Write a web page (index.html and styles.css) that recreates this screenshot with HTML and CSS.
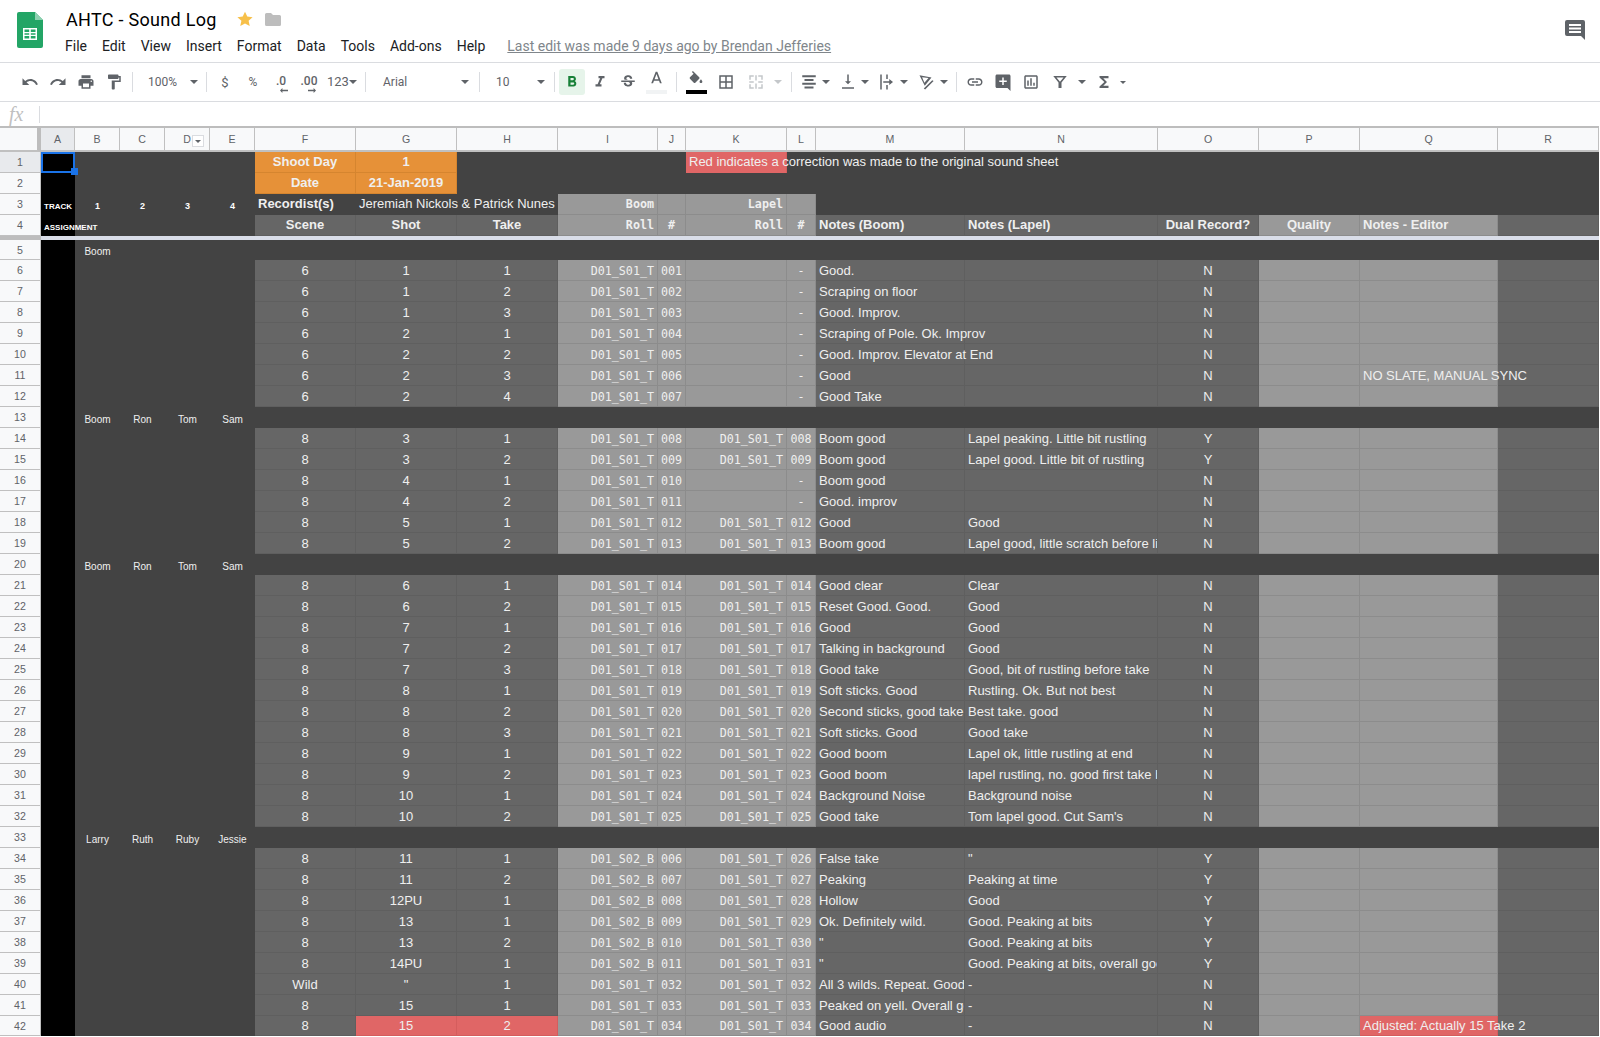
FILE: index.html
```html
<!DOCTYPE html>
<html lang="en">
<head>
<meta charset="utf-8">
<title>AHTC - Sound Log</title>
<link rel="stylesheet" href="styles.css">
</head>
<body>
<header class="top">
  <svg class="logo" viewBox="0 0 26 36"><path fill="#23a566" d="M2 0h16l8 8v26a2 2 0 0 1-2 2H2a2 2 0 0 1-2-2V2a2 2 0 0 1 2-2z"/><path fill="#8ed1b1" d="M18 0l8 8h-8z"/><path fill="#fff" d="M6 16h14v12H6zM7.500 17.500V20h4.700v-2.500zm6.300 0V20h4.700v-2.500zM7.500 21.200v1.600h4.700v-1.600zm6.300 0v1.600h4.700v-1.600zM7.500 24v2.500h4.700V24zm6.300 0v2.500h4.700V24z" fill-rule="evenodd"/></svg>
  <div class="doc">
    <div class="title-row">
      <span class="title">AHTC - Sound Log</span>
      <svg class="star" viewBox="0 0 24 24"><path fill="#f7c04a" d="M12 1l3.400 7.400 8 .9-6 5.400 1.700 7.900L12 18.600l-7.100 4 1.700-7.900-6-5.400 8-.9z"/></svg>
      <svg class="folder" viewBox="0 0 16 13"><path fill="#bdbdbd" d="M1.500 0H6l2 2h6.500A1.500 1.500 0 0 1 16 3.500v8a1.500 1.500 0 0 1-1.500 1.500h-13A1.500 1.500 0 0 1 0 11.500v-10A1.500 1.500 0 0 1 1.500 0z"/></svg>
    </div>
    <nav class="menu">
      <span>File</span><span>Edit</span><span>View</span><span>Insert</span><span>Format</span><span>Data</span><span>Tools</span><span>Add-ons</span><span>Help</span>
      <a class="last-edit">Last edit was made 9 days ago by Brendan Jefferies</a>
    </nav>
  </div>
  <svg class="chat" viewBox="0 0 20 20"><path fill="#5f6368" fill-rule="evenodd" d="M2 0h16a2 2 0 0 1 2 2v18l-4-4H2a2 2 0 0 1-2-2V2a2 2 0 0 1 2-2zm2 4v2h12V4zm0 3.500v2h12v-2zM4 11v2h12v-2z"/></svg>
</header>

<div class="toolbar">
  <span class="b"><svg viewBox="0 0 24 24"><path d="M12.500 8c-2.650 0-5.050.99-6.900 2.600L2 7v9h9l-3.620-3.620c1.390-1.160 3.160-1.880 5.120-1.880 3.540 0 6.550 2.310 7.600 5.500l2.370-.78C21.080 11.030 17.150 8 12.500 8z"/></svg></span>
  <span class="b"><svg viewBox="0 0 24 24"><path d="M18.400 10.600C16.550 8.990 14.150 8 11.500 8c-4.650 0-8.580 3.030-9.960 7.220L3.900 16c1.050-3.190 4.050-5.500 7.600-5.500 1.950 0 3.730.72 5.120 1.880L13 16h9V7l-3.600 3.600z"/></svg></span>
  <span class="b"><svg viewBox="0 0 24 24"><path d="M19 8H5c-1.660 0-3 1.340-3 3v6h4v4h12v-4h4v-6c0-1.660-1.340-3-3-3zm-3 11H8v-5h8v5zm3-7c-.55 0-1-.45-1-1s.45-1 1-1 1 .45 1 1-.45 1-1 1zm-1-9H6v4h12V3z"/></svg></span>
  <span class="b"><svg viewBox="0 0 24 24"><path d="M18 4V3c0-.55-.45-1-1-1H5c-.55 0-1 .45-1 1v4c0 .55.45 1 1 1h12c.55 0 1-.45 1-1V6h1v4H9v11c0 .55.45 1 1 1h2c.55 0 1-.45 1-1v-9h8V4h-3z"/></svg></span>
  <i class="sep s1"></i>
  <span class="sel zoomsel">100%<i class="arrow"></i></span>
  <i class="sep"></i>
  <span class="b ml4 txt">$</span>
  <span class="b txt small">%</span>
  <span class="b dec"><span>.0</span><svg viewBox="0 0 10 6"><path d="M0 3l3-3v2h7v2H3v2z"/></svg></span>
  <span class="b dec"><span>.00</span><svg viewBox="0 0 10 6"><path d="M10 3L7 0v2H0v2h7v2z"/></svg></span>
  <span class="sel numsel">123<i class="arrow"></i></span>
  <i class="sep"></i>
  <span class="sel fontsel">Arial<i class="arrow"></i></span>
  <i class="sep"></i>
  <span class="sel sizesel">10<i class="arrow"></i></span>
  <i class="sep"></i>
  <span class="b bold ml4"><svg viewBox="0 0 24 24"><path fill-rule="evenodd" d="M15.600 10.790c.97-.67 1.650-1.770 1.650-2.790 0-2.260-1.750-4-4-4H7v14h7.040c2.090 0 3.710-1.700 3.710-3.790 0-1.520-.86-2.820-2.150-3.420zM10 6.500h3c.83 0 1.500.67 1.500 1.500s-.67 1.500-1.500 1.500h-3v-3zm3.500 9H10v-3h3.500c.83 0 1.500.67 1.500 1.500s-.67 1.500-1.500 1.500z"/></svg></span>
  <span class="b"><svg viewBox="0 0 24 24"><path d="M10 4v3h2.210l-3.420 8H6v3h8v-3h-2.210l3.420-8H18V4z"/></svg></span>
  <span class="b"><svg viewBox="0 0 24 24"><path d="M7.240 8.750c-.26-.48-.39-1.030-.39-1.670 0-.61.13-1.160.4-1.670.26-.5.63-.93 1.110-1.290.48-.35 1.050-.63 1.700-.83.66-.19 1.390-.29 2.180-.29.81 0 1.540.11 2.210.34.66.22 1.230.54 1.690.94.47.4.83.88 1.080 1.430.25.55.38 1.150.38 1.810h-3.010c0-.31-.05-.59-.15-.85-.09-.27-.24-.49-.44-.68-.2-.19-.45-.33-.75-.44-.3-.1-.66-.16-1.060-.16-.39 0-.74.04-1.030.13-.29.09-.53.21-.72.36-.19.16-.34.34-.44.55-.1.21-.15.43-.15.66 0 .48.25.88.74 1.210.38.25.77.48 1.410.7H7.390c-.05-.08-.11-.17-.15-.25zM21 12v-2H3v2h9.620c.18.07.4.14.55.2.37.17.66.34.87.51.21.17.35.36.43.57.07.2.11.43.11.69 0 .23-.05.45-.14.66-.09.2-.23.38-.42.53-.19.15-.42.26-.71.35-.29.08-.63.13-1.010.13-.43 0-.83-.04-1.180-.13s-.66-.23-.91-.42c-.25-.19-.45-.44-.59-.75-.14-.31-.25-.76-.25-1.210H6.400c0 .55.08 1.130.24 1.580.16.45.37.85.65 1.210.28.35.6.66.98.92.37.26.78.48 1.220.65.44.17.9.3 1.380.39.48.08.96.13 1.440.13.8 0 1.530-.09 2.180-.28s1.210-.45 1.670-.79c.46-.34.82-.77 1.070-1.270s.38-1.070.38-1.710c0-.6-.1-1.140-.31-1.610-.05-.11-.11-.23-.17-.33H21z"/></svg></span>
  <span class="b colored tcolor"><svg viewBox="3 0 18 16"><path fill-rule="evenodd" d="M11 1L5.500 15h2.250l1.120-3h6.250l1.120 3h2.250L13 1h-2zm-1.380 9L12 3.670 14.380 10H9.620z"/></svg><i class="bar grey"></i></span>
  <i class="sep s2"></i>
  <span class="b colored ml5"><svg viewBox="0 0 24 24"><path d="M16.560 8.940L7.620 0 6.210 1.410l2.380 2.380-5.150 5.150c-.59.59-.59 1.540 0 2.120l5.500 5.500c.29.29.68.44 1.060.44s.77-.15 1.060-.44l5.500-5.500c.59-.58.59-1.530 0-2.120zM19 11.500s-2 2.170-2 3.500c0 1.100.9 2 2 2s2-.9 2-2c0-1.330-2-3.500-2-3.500z"/></svg><i class="bar black"></i></span>
  <span class="b ml2"><svg viewBox="0 0 24 24"><path fill-rule="evenodd" d="M3 3v18h18V3H3zm8 16H5v-6h6v6zm0-8H5V5h6v6zm8 8h-6v-6h6v6zm0-8h-6V5h6v6z"/></svg></span>
  <span class="b ml2 off"><svg viewBox="0 0 24 24"><path d="M3 3h6v2H5v4H3zM15 3h6v6h-2V5h-4zM3 15h2v4h4v2H3zM19 15h2v6h-6v-2h4zM3 11h6v2H3zM15 11h6v2h-6zM11 3h2v7h-2zM11 14h2v7h-2z"/></svg></span>
  <span class="ar16"><i class="arrow off"></i></span>
  <i class="sep s3"></i>
  <span class="c24 ml5"><svg viewBox="0 0 24 24"><path d="M3 3h18v2.500H3zM6 8h12v2.500H6zM3 13h18v2.500H3zM6 18h12v2.500H6z"/></svg></span>
  <span class="ar10"><i class="arrow"></i></span>
  <span class="c24 ml5"><svg viewBox="0 0 24 24"><path d="M16 11h-3V2h-2v9H8l4 4zM4 19v2h16v-2z"/></svg></span>
  <span class="ar10"><i class="arrow"></i></span>
  <span class="c24 ml5"><svg viewBox="0 0 24 24"><path d="M3 2h2v20H3zM11 2h2v6h-2zM11 16h2v6h-2zM7 11h8V8l5 4-5 4v-3H7z"/></svg></span>
  <span class="ar10"><i class="arrow"></i></span>
  <span class="c24 ml6"><svg viewBox="0 0 24 24"><path fill-rule="evenodd" d="M2 3l16 3-9 11zm3.500 2.600l3 7.300 5.500-6.300zM19 9.500l1.800 1.300L9.500 22l-1.800-1.300z"/></svg></span>
  <span class="ar10"><i class="arrow"></i></span>
  <i class="sep s4"></i>
  <span class="b ml4"><svg viewBox="0 0 24 24"><path d="M3.900 12c0-1.710 1.390-3.100 3.100-3.100h4V7H7c-2.760 0-5 2.240-5 5s2.240 5 5 5h4v-1.900H7c-1.710 0-3.100-1.390-3.100-3.100zM8 13h8v-2H8v2zm9-6h-4v1.900h4c1.710 0 3.100 1.390 3.100 3.100s-1.390 3.100-3.100 3.100h-4V17h4c2.760 0 5-2.240 5-5s-2.240-5-5-5z"/></svg></span>
  <span class="b"><svg viewBox="0 0 24 24"><path fill-rule="evenodd" d="M20 2H4c-1.100 0-2 .9-2 2v14c0 1.100.9 2 2 2h14l4 4V4c0-1.100-.9-2-2-2zm-3 10h-4v4h-2v-4H7v-2h4V6h2v4h4v2z"/></svg></span>
  <span class="b"><svg viewBox="0 0 24 24"><path fill-rule="evenodd" d="M19 3H5c-1.100 0-2 .9-2 2v14c0 1.100.9 2 2 2h14c1.100 0 2-.9 2-2V5c0-1.100-.9-2-2-2zm0 16H5V5h14v14zM9 17H7v-7h2v7zm4 0h-2V7h2v10zm4 0h-2v-4h2v4z"/></svg></span>
  <span class="b ml1"><svg viewBox="0 0 24 24"><path fill-rule="evenodd" d="M3 4h18l-7 8.500V20h-4v-7.500zM7.300 6l4.700 5.700L16.700 6z"/></svg></span>
  <span class="ar16"><i class="arrow"></i></span>
  <span class="b"><svg viewBox="0 0 24 24"><path d="M18 4H6v2l6.500 6L6 18v2h12v-3h-7l5-5-5-5h7V4z"/></svg></span>
  <span class="ar10"><i class="arrow tiny"></i></span>
</div>

<div class="formula"><span class="fx">fx</span><i class="fsep"></i></div>

<table class="sheet">
<colgroup><col class="w41"><col class="w34"><col class="w45"><col class="w45"><col class="w45"><col class="w45"><col class="w101"><col class="w101"><col class="w101"><col class="w100"><col class="w28"><col class="w101"><col class="w29"><col class="w149"><col class="w193"><col class="w101"><col class="w101"><col class="w138"><col class="w101"></colgroup>
<thead><tr><th class="corner"><th class="on">A<th>B<th>C<th class="dcol">D<span class="fbtn"><i class="arrow tiny"></i></span><th>E<th>F<th>G<th>H<th>I<th>J<th>K<th>L<th>M<th>N<th>O<th>P<th>Q<th>R</thead>
<tbody>
<tr class="r1"><th class="on">1<td class="sel"><i class="handle"></i><td><td><td><td><td class="o">Shoot Day<td class="o">1<td><td><td><td class="red">Red indicates a correction was made to the original sound sheet<td><td><td><td><td><td><td>
<tr class="r1"><th>2<td><td><td><td><td><td class="o">Date<td class="o">21-Jan-2019<td><td><td><td><td><td><td><td><td><td><td>
<tr class="r3"><th>3<td class="tk">TRACK<td class="tn">1<td class="tn">2<td class="tn">3<td class="tn">4<td class="lbl">Recordist(s)<td class="names">Jeremiah Nickols &amp; Patrick Nunes<td><td>Boom<td><td>Lapel<td><td><td><td><td><td><td>
<tr class="d r4"><th>4<td class="tk asg">ASSIGNMENT<td><td><td><td><td>Scene<td>Shot<td>Take<td>Roll<td>#<td>Roll<td>#<td>Notes (Boom)<td>Notes (Lapel)<td>Dual Record?<td>Quality<td>Notes - Editor<td>
<tr class="band"><th><td colspan="18">
<tr class="s r5"><th>5<td><td class="as">Boom<td><td><td><td><td><td><td><td><td><td><td><td><td><td><td><td>
<tr class="d"><th>6<td><td><td><td><td><td>6<td>1<td>1<td>D01_S01_T<td>001<td><td>-<td>Good.<td><td>N<td><td><td>
<tr class="d"><th>7<td><td><td><td><td><td>6<td>1<td>2<td>D01_S01_T<td>002<td><td>-<td>Scraping on floor<td><td>N<td><td><td>
<tr class="d"><th>8<td><td><td><td><td><td>6<td>1<td>3<td>D01_S01_T<td>003<td><td>-<td>Good. Improv.<td><td>N<td><td><td>
<tr class="d"><th>9<td><td><td><td><td><td>6<td>2<td>1<td>D01_S01_T<td>004<td><td>-<td class="spill">Scraping of Pole. Ok. Improv<td><td>N<td><td><td>
<tr class="d"><th>10<td><td><td><td><td><td>6<td>2<td>2<td>D01_S01_T<td>005<td><td>-<td class="spill">Good. Improv. Elevator at End<td><td>N<td><td><td>
<tr class="d"><th>11<td><td><td><td><td><td>6<td>2<td>3<td>D01_S01_T<td>006<td><td>-<td>Good<td><td>N<td><td>NO SLATE, MANUAL SYNC<td>
<tr class="d"><th>12<td><td><td><td><td><td>6<td>2<td>4<td>D01_S01_T<td>007<td><td>-<td>Good Take<td><td>N<td><td><td>
<tr class="s"><th>13<td><td class="as">Boom<td class="as">Ron<td class="as">Tom<td class="as">Sam<td><td><td><td><td><td><td><td><td><td><td><td><td>
<tr class="d"><th>14<td><td><td><td><td><td>8<td>3<td>1<td>D01_S01_T<td>008<td>D01_S01_T<td>008<td>Boom good<td>Lapel peaking. Little bit rustling<td>Y<td><td><td>
<tr class="d"><th>15<td><td><td><td><td><td>8<td>3<td>2<td>D01_S01_T<td>009<td>D01_S01_T<td>009<td>Boom good<td>Lapel good. Little bit of rustling<td>Y<td><td><td>
<tr class="d"><th>16<td><td><td><td><td><td>8<td>4<td>1<td>D01_S01_T<td>010<td><td>-<td>Boom good<td><td>N<td><td><td>
<tr class="d"><th>17<td><td><td><td><td><td>8<td>4<td>2<td>D01_S01_T<td>011<td><td>-<td>Good. improv<td><td>N<td><td><td>
<tr class="d"><th>18<td><td><td><td><td><td>8<td>5<td>1<td>D01_S01_T<td>012<td>D01_S01_T<td>012<td>Good<td>Good<td>N<td><td><td>
<tr class="d"><th>19<td><td><td><td><td><td>8<td>5<td>2<td>D01_S01_T<td>013<td>D01_S01_T<td>013<td>Boom good<td>Lapel good, little scratch before line<td>N<td><td><td>
<tr class="s"><th>20<td><td class="as">Boom<td class="as">Ron<td class="as">Tom<td class="as">Sam<td><td><td><td><td><td><td><td><td><td><td><td><td>
<tr class="d"><th>21<td><td><td><td><td><td>8<td>6<td>1<td>D01_S01_T<td>014<td>D01_S01_T<td>014<td>Good clear<td>Clear<td>N<td><td><td>
<tr class="d"><th>22<td><td><td><td><td><td>8<td>6<td>2<td>D01_S01_T<td>015<td>D01_S01_T<td>015<td>Reset Good. Good.<td>Good<td>N<td><td><td>
<tr class="d"><th>23<td><td><td><td><td><td>8<td>7<td>1<td>D01_S01_T<td>016<td>D01_S01_T<td>016<td>Good<td>Good<td>N<td><td><td>
<tr class="d"><th>24<td><td><td><td><td><td>8<td>7<td>2<td>D01_S01_T<td>017<td>D01_S01_T<td>017<td>Talking in background<td>Good<td>N<td><td><td>
<tr class="d"><th>25<td><td><td><td><td><td>8<td>7<td>3<td>D01_S01_T<td>018<td>D01_S01_T<td>018<td>Good take<td>Good, bit of rustling before take<td>N<td><td><td>
<tr class="d"><th>26<td><td><td><td><td><td>8<td>8<td>1<td>D01_S01_T<td>019<td>D01_S01_T<td>019<td>Soft sticks. Good<td>Rustling. Ok. But not best<td>N<td><td><td>
<tr class="d"><th>27<td><td><td><td><td><td>8<td>8<td>2<td>D01_S01_T<td>020<td>D01_S01_T<td>020<td>Second sticks, good take<td>Best take. good<td>N<td><td><td>
<tr class="d"><th>28<td><td><td><td><td><td>8<td>8<td>3<td>D01_S01_T<td>021<td>D01_S01_T<td>021<td>Soft sticks. Good<td>Good take<td>N<td><td><td>
<tr class="d"><th>29<td><td><td><td><td><td>8<td>9<td>1<td>D01_S01_T<td>022<td>D01_S01_T<td>022<td>Good boom<td>Lapel ok, little rustling at end<td>N<td><td><td>
<tr class="d"><th>30<td><td><td><td><td><td>8<td>9<td>2<td>D01_S01_T<td>023<td>D01_S01_T<td>023<td>Good boom<td>lapel rustling, no. good first take better<td>N<td><td><td>
<tr class="d"><th>31<td><td><td><td><td><td>8<td>10<td>1<td>D01_S01_T<td>024<td>D01_S01_T<td>024<td>Background Noise<td>Background noise<td>N<td><td><td>
<tr class="d"><th>32<td><td><td><td><td><td>8<td>10<td>2<td>D01_S01_T<td>025<td>D01_S01_T<td>025<td>Good take<td>Tom lapel good. Cut Sam's<td>N<td><td><td>
<tr class="s"><th>33<td><td class="as">Larry<td class="as">Ruth<td class="as">Ruby<td class="as">Jessie<td><td><td><td><td><td><td><td><td><td><td><td><td>
<tr class="d"><th>34<td><td><td><td><td><td>8<td>11<td>1<td>D01_S02_B<td>006<td>D01_S01_T<td>026<td>False take<td>"<td>Y<td><td><td>
<tr class="d"><th>35<td><td><td><td><td><td>8<td>11<td>2<td>D01_S02_B<td>007<td>D01_S01_T<td>027<td>Peaking<td>Peaking at time<td>Y<td><td><td>
<tr class="d"><th>36<td><td><td><td><td><td>8<td>12PU<td>1<td>D01_S02_B<td>008<td>D01_S01_T<td>028<td>Hollow<td>Good<td>Y<td><td><td>
<tr class="d"><th>37<td><td><td><td><td><td>8<td>13<td>1<td>D01_S02_B<td>009<td>D01_S01_T<td>029<td>Ok. Definitely wild.<td>Good. Peaking at bits<td>Y<td><td><td>
<tr class="d"><th>38<td><td><td><td><td><td>8<td>13<td>2<td>D01_S02_B<td>010<td>D01_S01_T<td>030<td>"<td>Good. Peaking at bits<td>Y<td><td><td>
<tr class="d"><th>39<td><td><td><td><td><td>8<td>14PU<td>1<td>D01_S02_B<td>011<td>D01_S01_T<td>031<td>"<td>Good. Peaking at bits, overall good<td>Y<td><td><td>
<tr class="d"><th>40<td><td><td><td><td><td>Wild<td>"<td>1<td>D01_S01_T<td>032<td>D01_S01_T<td>032<td>All 3 wilds. Repeat. Good take<td>-<td>N<td><td><td>
<tr class="d"><th>41<td><td><td><td><td><td>8<td>15<td>1<td>D01_S01_T<td>033<td>D01_S01_T<td>033<td>Peaked on yell. Overall good<td>-<td>N<td><td><td>
<tr class="d last"><th>42<td><td><td><td><td><td>8<td class="red">15<td class="red">2<td>D01_S01_T<td>034<td>D01_S01_T<td>034<td>Good audio<td>-<td>N<td><td class="red">Adjusted: Actually 15 Take 2<td>
</tbody>
</table>
</body>
</html>
```
FILE: styles.css
```css
* { box-sizing: border-box; }
html, body { margin: 0; height: 1037px; overflow: hidden; background: #fff; }
body { font-family: "Liberation Sans", Arial, sans-serif; color: #3c4043; }

.top { display: flex; height: 63px; border-bottom: 1px solid #dadce0; }
.logo { width: 26px; height: 36px; margin: 12px 0 0 17px; flex: none; }
.doc { margin-left: 22px; flex: none; }
.title-row { display: flex; align-items: center; height: 27px; margin-top: 6px; }
.title { font: 18px/24px Roboto, sans-serif; color: #000; width: 172px; letter-spacing: .3px; padding-left: 1px; }
.star { width: 16px; height: 16px; margin-top: -1px; }
.folder { width: 16px; height: 13px; margin-left: 12px; }
.menu { display: flex; align-items: center; gap: 15px; font: 14px/18px Roboto, sans-serif; color: #202124; margin-top: 4px; }
.last-edit { color: #80868b; text-decoration: underline; margin-left: 7px; font-size: 14px; }
.chat { width: 20px; height: 20px; margin: 20px 15px 0 auto; flex: none; }

.toolbar { display: flex; align-items: center; height: 39px; padding-left: 16px; border-bottom: 1px solid #dadce0; }
.toolbar svg { fill: #5f6368; }
.b { width: 28px; height: 26px; display: flex; align-items: center; justify-content: center; flex: none; position: relative; }
.b > svg { width: 18px; height: 18px; }
.c24 { width: 24px; height: 26px; display: flex; align-items: center; justify-content: center; flex: none; }
.c24 > svg { width: 18px; height: 18px; }
.ar16, .ar10 { display: flex; align-items: center; justify-content: center; height: 26px; flex: none; }
.ar16 { width: 16px; }
.ar10 { width: 10px; }
.arrow { display: block; width: 0; height: 0; border: 4px solid transparent; border-top-color: #5f6368; border-bottom: 0; flex: none; }
.arrow.off { border-top-color: #c4c7ca; }
.arrow.tiny { border-width: 3px; border-bottom: 0; }
.sep { width: 1px; height: 20px; background: #dadce0; flex: none; }
.s1 { margin-left: 4px; }
.s2 { margin-left: 6px; }
.s3 { margin-left: 5px; }
.s4 { margin-left: 7px; }
.ml1 { margin-left: 1px; }
.ml2 { margin-left: 2px; }
.ml4 { margin-left: 4px; }
.ml5 { margin-left: 5px; }
.ml6 { margin-left: 6px; }
.sel { display: flex; align-items: center; justify-content: space-between; font: 12px/16px Roboto, sans-serif; color: #5f6368; height: 26px; flex: none; }
.zoomsel { width: 73px; padding: 0 8px 0 15px; }
.numsel { width: 42px; padding: 0 9px 0 4px; font-size: 13px; }
.fontsel { width: 113px; padding: 0 10px 0 17px; }
.sizesel { width: 74px; padding: 0 9px 0 16px; }
.txt { font: 13px Roboto, sans-serif; color: #5f6368; }
.small { font-size: 12px; }
.dec { flex-direction: column; font: 500 12px/12px Roboto, sans-serif; color: #5f6368; padding-top: 3px; }
.dec svg { width: 8px; height: 5px; margin: 1px 0 0 5px; }
.bold { width: 26px; margin-right: 1px; background: #e6f4ea; border-radius: 3px; }
.toolbar .bold svg { fill: #188038; }
.colored { flex-direction: column; justify-content: flex-start; padding-top: 2px; }
.colored svg { height: 17px; }
.tcolor svg { width: 15px; height: 13px; margin-bottom: 4px; }
.bar { display: block; width: 21px; height: 4px; margin-top: 2px; }
.bar.grey { background: #f1f3f4; }
.bar.black { background: #000; }
.toolbar .off svg { fill: #c4c7ca; }

.formula { display: flex; align-items: center; height: 24px; }
.fx { font: italic 20px/24px "Liberation Serif", serif; color: #c0c0c0; width: 39px; padding-left: 9px; }
.fsep { width: 1px; height: 17px; background: #dadce0; }

.sheet { table-layout: fixed; border-collapse: separate; border-spacing: 0; width: 1599px; border-top: 2px solid #bdbdbd; font-size: 13px; color: #efefef; }
.w28 { width: 28px; } .w29 { width: 29px; } .w34 { width: 34px; } .w41 { width: 41px; } .w45 { width: 45px; }
.w100 { width: 100px; } .w101 { width: 101px; } .w138 { width: 138px; } .w149 { width: 149px; } .w193 { width: 193px; }

.sheet th { background: #f8f9fa; font: 10.6px/14px "Liberation Sans", sans-serif; color: #5f6368; border-right: 1px solid #c0c0c0; border-bottom: 1px solid #c0c0c0; padding: 0; text-align: center; }
.sheet thead th { height: 24px; border-bottom-width: 2px; }
.sheet tbody th { height: 21px; }
.sheet th.corner { border-right: 4px solid #bdbdbd; }
.sheet th.on { background: #e8eaed; }
.dcol { position: relative; }
.fbtn { position: absolute; left: 27px; top: 7px; width: 12px; height: 12px; background: #fff; border: 1px solid #dadce0; display: flex; align-items: center; justify-content: center; }

.sheet td { background: #434343; height: 21px; padding: 0 3px; white-space: nowrap; vertical-align: bottom; line-height: 18px; }
.sheet td:nth-child(2) { background: #000; overflow: visible; }

/* header strip, rows 1 to 3 */
.sheet td.o { background: #e69138; border-right: 1px solid #d5852f; border-bottom: 1px solid #d5852f; font-weight: bold; text-align: center; padding-bottom: 1px; }
.sheet td.red { background: #e06666; border-right: 1px solid #d45d5d; }
.r1 td.red { padding-bottom: 2px; }
.sheet td.sel { position: relative; box-shadow: inset 0 0 0 2px #1a73e8; }
.handle { position: absolute; right: -3px; bottom: -2px; width: 7px; height: 7px; background: #1a73e8; z-index: 2; }
.sheet td.tk { font: bold 8px/14px "Liberation Sans", sans-serif; color: #fff; padding-bottom: 1px; }
.sheet td.asg { padding-bottom: 2px; }
.sheet td.tn { font: bold 9px/14px "Liberation Sans", sans-serif; color: #fff; text-align: center; padding-bottom: 2px; }
.sheet td.lbl { font-weight: bold; padding-bottom: 2px; }
.sheet td.names { padding-bottom: 2px; }

/* roll columns */
.d td:nth-child(n+10):nth-child(-n+13), .r3 td:nth-child(n+10):nth-child(-n+13) { font: 11.7px/18px "DejaVu Sans Mono", monospace; }
.d td:nth-child(10), .d td:nth-child(12), .r3 td:nth-child(10), .r3 td:nth-child(12) { text-align: right; }
.d td:nth-child(11), .d td:nth-child(13), .r3 td:nth-child(11), .r3 td:nth-child(13) { text-align: center; padding-left: 0; padding-right: 0; }
.sheet .r3 td:nth-child(n+10):nth-child(-n+13), .sheet .r4 td:nth-child(n+10):nth-child(-n+13) { font-weight: bold; }
.r3 td:nth-child(n+10):nth-child(-n+13) { background: #999; border-right: 1px solid #8c8c8c; border-bottom: 1px solid #8c8c8c; padding-bottom: 1px; }

/* data rows */
.d td:nth-child(n+7):nth-child(-n+9), .d td:nth-child(16), .d td:nth-child(17) { text-align: center; }
.d td:nth-child(n+7):nth-child(-n+9), .d td:nth-child(n+14):nth-child(-n+16), .d td:nth-child(19) { background: #666; border-right: 1px solid #5f5f5f; border-bottom: 1px solid #5f5f5f; }
.d td:nth-child(n+10):nth-child(-n+13), .d td:nth-child(17), .d td:nth-child(18) { background: #999; border-right: 1px solid #8c8c8c; border-bottom: 1px solid #8c8c8c; }
.d td:nth-child(14), .d td:nth-child(15) { overflow: hidden; text-overflow: clip; }
.sheet .d td.spill { overflow: visible; }
.sheet .d td.red { background: #e06666; border-color: #d45d5d; }

.r4 td { font-weight: bold; padding-bottom: 1px; }
.sheet .r4 td { padding-bottom: 1px; }

.band th { height: 4px !important; background: #bdbdbd !important; border: 0 !important; font-size: 0; line-height: 0; }
.sheet .band td { height: 4px; background: #d9dde8; padding: 0; line-height: 0; font-size: 0; }

.r5 th, .sheet .r5 td { height: 20px !important; }
.sheet td.as { font-size: 10px; line-height: 14px; text-align: center; padding: 0 0 1px; }
.sheet .last th, .sheet .last td { height: 20px !important; }
```
